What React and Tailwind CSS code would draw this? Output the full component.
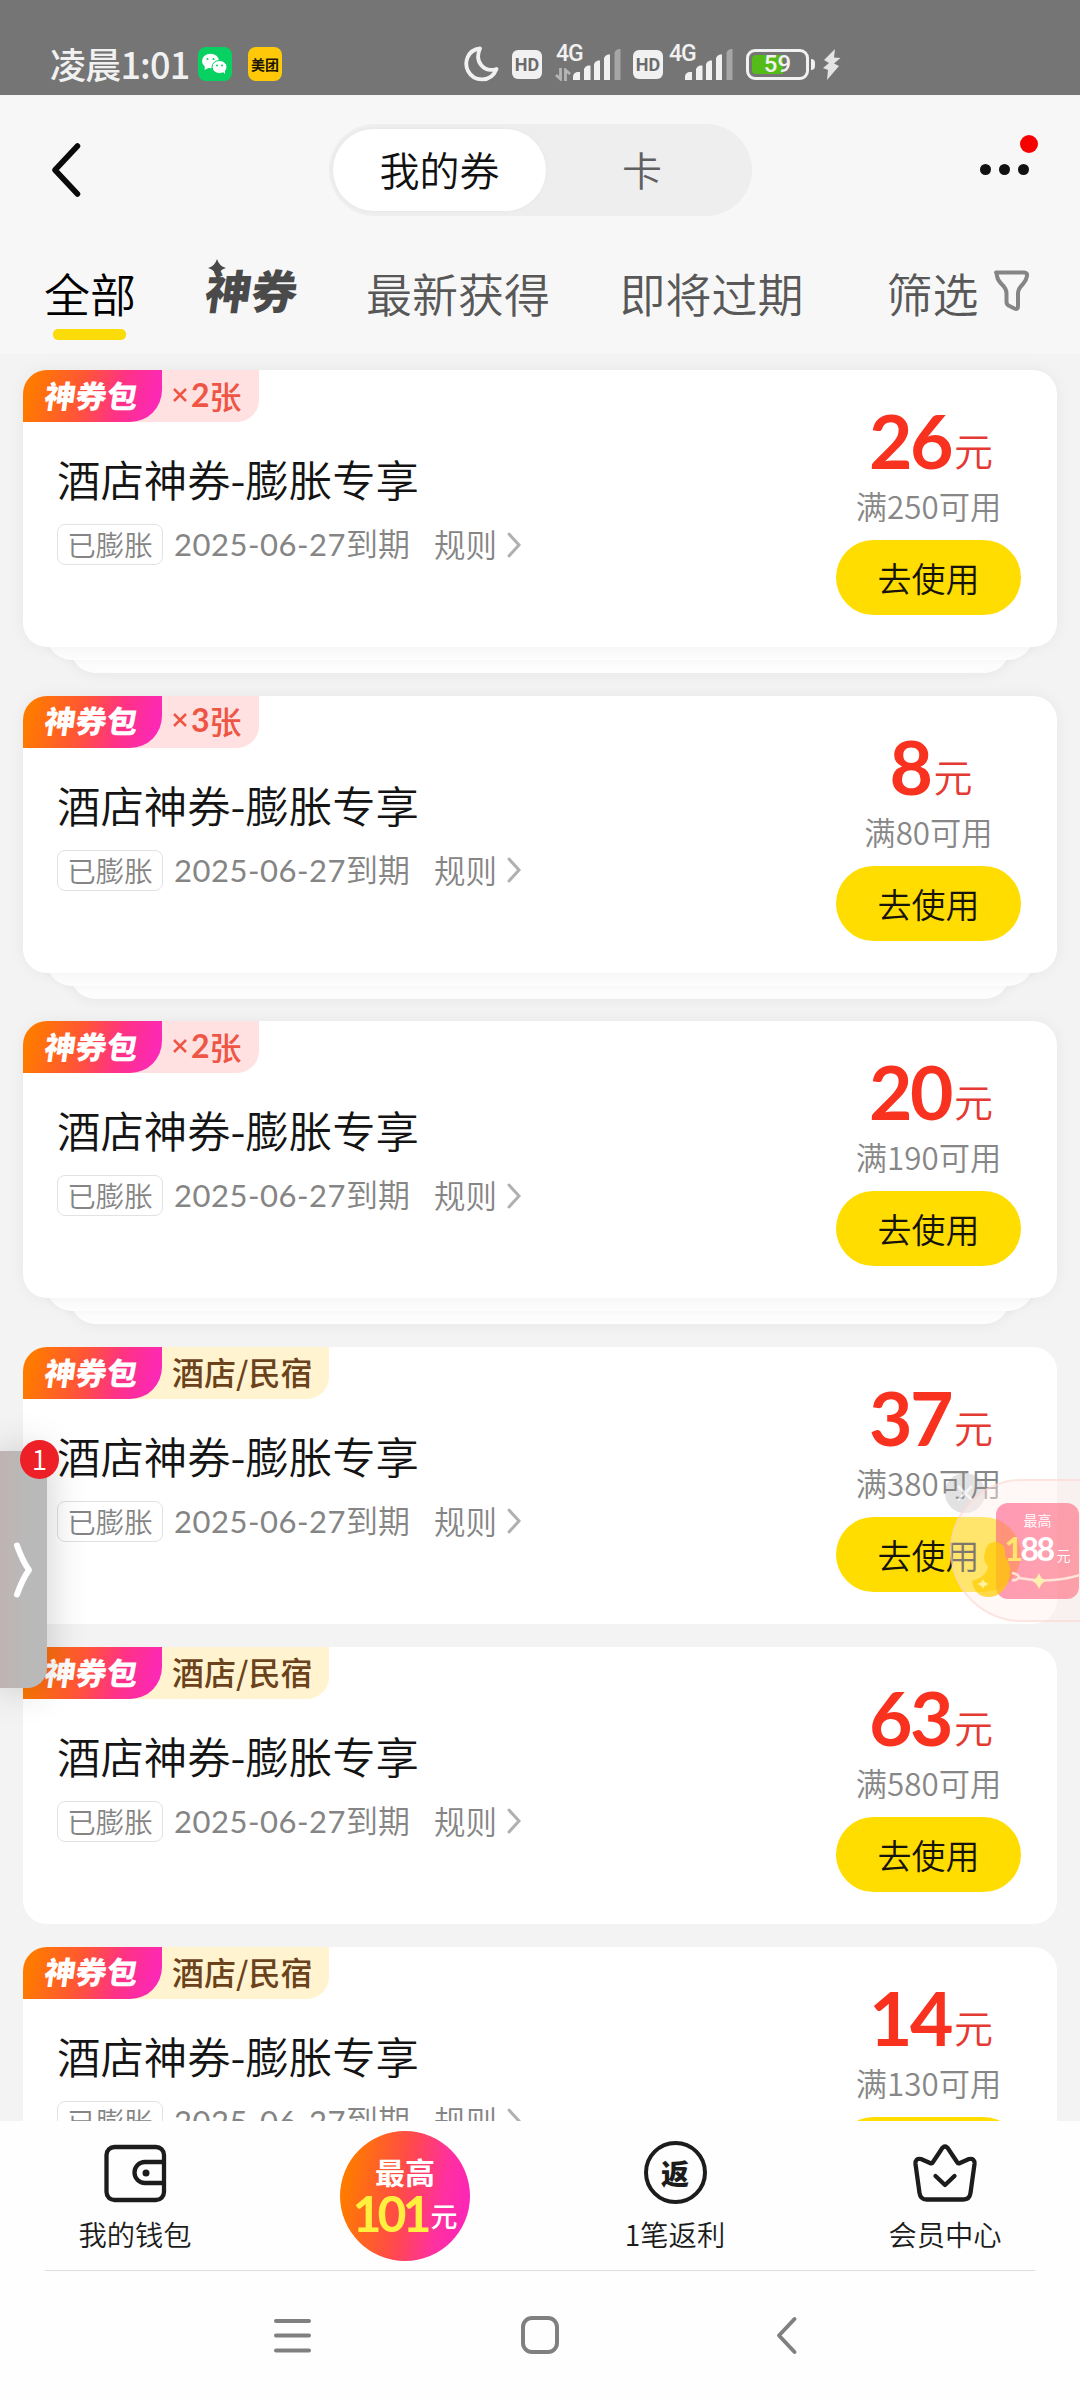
import React from "react";

const coupons = [
  { amount: 26, limit: 250, count: 2 },
  { amount: 8, limit: 80, count: 3 },
  { amount: 20, limit: 190, count: 2 },
  { amount: 37, limit: 380 },
  { amount: 63, limit: 580 },
  { amount: 14, limit: 130 },
];

const Signal = () => (
  <svg width="48" height="31" viewBox="0 0 48 31" fill="#f1f1f1">
    <path d="M0 31v-3q0-4 4-5h3v8z" />
    <path d="M11 31V20q1-3 4-3.500h2.500V31z" />
    <path d="M21 31V15q1-3 4-3.500h2V31z" />
    <path d="M31 31V9q1-3 4-3.500h2V31z" />
    <path d="M41.500 31V3.500q1-3 4-3.500h2v31z" opacity="0.4" />
  </svg>
);

const HdBadge = () => (
  <div className="w-[30px] h-[29px] rounded-[6px] bg-[#f1f1f1] text-[#6a6a6a] flex items-center justify-center font-['Roboto'] font-bold text-[18px]">
    HD
  </div>
);

const StatusBar = () => (
  <div className="h-[95px] bg-[#757575] relative text-[#f1f1f1] shrink-0">
    <div className="flex items-center pl-[50px] pt-[36px] h-[90px]">
      <span className="text-[36px] leading-[52px] font-medium w-[148px] whitespace-nowrap tracking-[-0.8px]">凌晨1:01</span>
      <svg className="mt-[2px]" width="34" height="34" viewBox="0 0 34 34">
        <rect width="34" height="34" rx="8" fill="#07d160" />
        <ellipse cx="12.500" cy="14" rx="8.500" ry="7.300" fill="#fff" />
        <path d="M7 18l-.500 5 4-2z" fill="#fff" />
        <ellipse cx="21.500" cy="20" rx="7.500" ry="6.500" fill="#fff" stroke="#07d160" />
        <path d="M24 24l3 3v-5z" fill="#fff" />
        <g fill="#07d160">
          <circle cx="9.500" cy="12" r="1.100" />
          <circle cx="15.500" cy="12" r="1.100" />
          <circle cx="19" cy="18.500" r="1" />
          <circle cx="24" cy="18.500" r="1" />
        </g>
      </svg>
      <div className="ml-4 mt-[2px] size-[34px] rounded-[8px] bg-[#ffc90a] text-[#1c1600] text-[14px] font-bold flex items-center justify-center">美团</div>

      <div className="flex items-center ml-[182px] mt-[2px]">
        <svg width="35" height="36" viewBox="0 0 35 36" fill="none" stroke="#f1f1f1" strokeWidth="3.800" strokeLinejoin="round">
          <path d="M16 2.500C3 4 0 17 4 25c6 11 23 12 28.500-2C20 27 10 16 16 2.500z" />
        </svg>
        <div className="ml-[13px]"><HdBadge /></div>
        <div className="ml-[13px] w-[66px] h-[36px] relative">
          <span className="absolute left-[1px] -top-[4px] font-['Roboto'] font-medium text-[23px] leading-[24px] tracking-[-1px]">4G</span>
          <svg className="absolute left-0 top-[22px]" width="16" height="13" viewBox="0 0 16 13" fill="none" stroke="#b5b5b5" strokeWidth="2.800">
            <path d="M5.500 0v11L1 7M10.500 13V2l4.500 4" />
          </svg>
          <div className="absolute right-0 top-[3px]"><Signal /></div>
        </div>
        <div className="ml-[12px]"><HdBadge /></div>
        <div className="ml-[5px] w-[65px] h-[36px] relative">
          <span className="absolute left-[1px] -top-[4px] font-['Roboto'] font-medium text-[23px] leading-[24px] tracking-[-1px]">4G</span>
          <div className="absolute right-0 top-[3px]"><Signal /></div>
        </div>
        <div className="ml-[13px] w-[63px] h-[31px] rounded-[9px] border-[3.500px] border-[#f1f1f1] relative flex items-center justify-center">
          <div className="absolute left-[3px] top-[3px] w-[31px] h-[19px] rounded-l-[4px] bg-[#55bb18]" />
          <span className="relative font-['Roboto'] font-medium text-[24px] leading-none">59</span>
        </div>
        <div className="ml-[2px] w-[4px] h-[11px] rounded-r bg-[#f1f1f1]" />
        <svg className="ml-[7px]" width="19" height="31" viewBox="0 0 19 31" fill="#e4e4e4">
          <path d="M13 0L2 11l5 3-6 5 5 2-1 10L17 17l-5-2.500L18.500 9 12 8.500z" />
        </svg>
      </div>
    </div>
  </div>
);

const Header = () => (
  <div className="h-[121px] flex items-center relative shrink-0">
    <svg className="ml-[50px] mt-[28px]" width="32" height="54" viewBox="0 0 32 54" fill="none" stroke="#0a0a0a" strokeWidth="5.500" strokeLinecap="round" strokeLinejoin="round">
      <path d="M27.500 3L5 27l22.500 24" />
    </svg>
    <div className="ml-[247px] mt-[29px] w-[423px] h-[92px] rounded-full bg-[#eeeeee] flex items-center text-[40px]">
      <div className="ml-1 w-[213px] h-[82px] pb-[2px] rounded-full bg-white shadow-[0_0_4px_rgba(0,0,0,0.04)] flex items-center justify-center text-[#111]">我的券</div>
      <div className="flex-1 text-center text-[#606060] pr-[14px] pb-[2px]">卡</div>
    </div>
    <div className="ml-[228px] mt-[27px] flex gap-2 relative">
      <i className="size-[11px] rounded-full bg-[#111]" />
      <i className="size-[11px] rounded-full bg-[#111]" />
      <i className="size-[11px] rounded-full bg-[#111]" />
      <i className="absolute -right-[9px] -top-[29px] size-[18px] rounded-full bg-[#f60000]" />
    </div>
  </div>
);

const Tabs = () => (
  <div className="h-[138px] shrink-0 flex items-start pl-[44px] pt-[41px] text-[46px] leading-[70px] text-[#585858] whitespace-nowrap">
    <div className="w-[160px] text-black">
      全部
      <div className="ml-[9px] mt-[2px] w-[73px] h-[11px] rounded-[5px] bg-[#fbdb08]" />
    </div>
    <div className="w-[162px] relative font-black text-[#4a4a4a] text-[46px] leading-[64px]">
      <span className="inline-block -skew-x-8 ml-[2px]">神券</span>
      <svg className="absolute left-[4px] top-[2px]" width="18" height="18" viewBox="0 0 18 18" fill="#4a4a4a">
        <path d="M9 0Q11 7 18 9 11 11 9 18 7 11 0 9 7 7 9 0z" />
      </svg>
    </div>
    <div className="w-[253.500px]">最新获得</div>
    <div className="w-[267px]">即将过期</div>
    <div>筛选</div>
    <svg className="ml-[12px] mt-[13px]" width="38" height="42" viewBox="0 0 38 42" fill="none" stroke="#858585" strokeWidth="4" strokeLinejoin="round">
      <path d="M5 2.500h28q3.500 0 3 3.500-.500 4-4 8-5 5-5 9v13q0 4-3.500 2.500l-6-3q-2-1-2-4v-8q0-5-5-9.500-4-4-4.500-8-.500-3.500-1-3.500z" />
    </svg>
  </div>
);

const Coupon = ({ amount, limit, count }) => (
  <div className={count ? "relative mb-[48.670px] shrink-0" : "relative mb-[22.850px] shrink-0"}>
    {count && (
      <>
        <div className="absolute left-[47px] right-[47px] -bottom-[26px] h-[60px] rounded-[26px] bg-[#fdfdfd] shadow-[0_2px_14px_rgba(0,0,0,0.05)]" />
        <div className="absolute left-[23px] right-[23px] -bottom-[13px] h-[60px] rounded-[26px] bg-[#fdfdfd] shadow-[0_0_8px_rgba(0,0,0,0.05)]" />
      </>
    )}
    <div className={`relative h-[277px] rounded-[24px] bg-white flex justify-between ${count ? "shadow-[0_0_16px_rgba(0,0,0,0.05)]" : ""}`}>
      <div>
        <div className={`flex w-fit h-[52px] rounded-tl-[24px] rounded-br-[22px] ${count ? "bg-[#ffe1e1] text-[#ee5545]" : "bg-[#fff4cf] text-[#6b421c]"}`}>
          <div className="w-[139px] h-[52px] rounded-tl-[24px] rounded-br-[32px] bg-[linear-gradient(105deg,#ff7a00_8%,#ff5536_42%,#ff3285_68%,#fb26c4_100%)] flex items-center justify-center">
            <span className="text-white font-black text-[31px] -skew-x-8 pb-[2px] pr-[2px]">神券包</span>
          </div>
          <div className={`flex items-center text-[32px] font-medium pl-[10px] pb-[3px] ${count ? "w-[97px]" : "w-[167px]"}`}>
            {count ? (
              <>
                <svg width="16" height="16" viewBox="0 0 16 16" stroke="#ee5545" strokeWidth="2.500"><path d="M2 2l12 12M14 2L2 14" /></svg>
                <span className="ml-[3px] font-['Lato'] font-bold">{count}</span>张
              </>
            ) : (
              "酒店/民宿"
            )}
          </div>
        </div>
        <h3 className="ml-[34px] mt-[24px] text-[43.400px] leading-[64px] text-[#141414] whitespace-nowrap">酒店神券-膨胀专享</h3>
        <div className="ml-[34px] mt-[12px] flex items-center whitespace-nowrap text-[#858585] text-[32px] leading-[40px]">
          <div className="w-[106px] h-[41px] rounded-[8px] border border-[#e2e2e2] text-[28.500px] leading-[37px] text-center">已膨胀</div>
          <div className="ml-[11px] mb-[3px] w-[260px]">
            <span className="font-['Lato'] font-normal text-[31px] tracking-[0.500px]">2025-06-27</span>到期
          </div>
          <span className="text-[31.500px] mb-[3px]">规则</span>
          <svg className="ml-[9px]" width="16" height="26" viewBox="0 0 16 26" fill="none" stroke="#b0b0b0" strokeWidth="3" strokeLinecap="round">
            <path d="M3 2l10 11L3 24" />
          </svg>
        </div>
      </div>
      <div className="w-[185px] mr-[36px] flex flex-col items-center whitespace-nowrap">
        <div className="mt-[40px] ml-[5px] h-[73px] flex items-baseline text-[#f9311f]">
          <span className="font-['Lato'] font-bold text-[75px] leading-[60px] tracking-[-2.500px]">{amount}</span>
          <span className="relative -top-[3px] text-[39px] leading-[40px] text-[#e43a33] ml-[3px]">元</span>
        </div>
        <div className="text-[31.300px] leading-[46px] text-[#878787]">满{limit}可用</div>
        <div className="mt-[11px] w-[185px] h-[75px] rounded-full bg-[#ffdd00] text-[#16130a] text-[34px] leading-[75px] text-center">去使用</div>
      </div>
    </div>
  </div>
);

const SidePanel = () => (
  <div className="absolute left-0 top-[1451px] w-[47px] h-[237px] rounded-br-[20px] rounded-tr-[10px] bg-[linear-gradient(90deg,#bfb4b3,#b9b9b9_60%)] shadow-[0_0_40px_rgba(0,0,0,0.2)]">
    <svg className="absolute left-[13px] top-[90px]" width="22" height="58" viewBox="0 0 22 58" fill="none" stroke="#fff" strokeWidth="6" strokeLinecap="round" strokeLinejoin="round">
      <path d="M4 4.500Q10 21 16 29 10 37 4 53.500" />
    </svg>
    <div className="absolute left-[20px] -top-[11px] size-[39px] rounded-full bg-[#ee2027] text-white text-[28px] leading-[37px] text-center">1</div>
  </div>
);

const FloatingPromo = () => (
  <div className="absolute right-0 top-[1470px] w-[140px] h-[160px] overflow-hidden">
    <div className="absolute left-[5px] top-[3px] size-[40px] rounded-full bg-[#8c8c8c]/25 flex items-center justify-center">
      <svg width="18" height="18" viewBox="0 0 18 18" stroke="#fff" strokeWidth="2.500" opacity="0.7"><path d="M2 2l14 14M16 2L2 16" /></svg>
    </div>
    <div className="absolute left-[10px] top-[9px] w-[200px] h-[143px] rounded-l-full border-2 border-[#fbd0ca]/50 bg-[#fff0ee]/45" />
    <div className="absolute left-[56px] top-[33px] w-[83px] h-[96px] rounded-[12px] bg-[linear-gradient(100deg,#ff5a8899,#ff5a6a88)]" />
    <svg className="absolute left-0 top-0" width="140" height="160" viewBox="0 0 140 160">
      <path
        d="M45 82q2-11 11-10 10 1 9 14 6 8 5 19-4 20-20 22-15 1-18-16 14-4 16-14-6-7-3-15z"
        fill="#ffcc00"
        opacity="0.7"
      />
      <path d="M72 103q6 1 7 4-2 4-7 3M79 108q32 6 61-3" fill="none" stroke="#ffe3d8" strokeWidth="2.500" />
      <path d="M99 103q2 6 7 8-5 2-7 8-2-6-7-8 5-2 7-8z" fill="#fff0b0" />
      <path d="M43 109q1 4 6 5-5 1-6 5-1-4-6-5 5-1 6-5z" fill="#fff3a0" />
    </svg>
    <div className="absolute left-[55px] top-[33px] w-[85px] flex flex-col items-center text-white">
      <span className="text-[14px] leading-[20px] mt-[7px]">最高</span>
      <div className="flex items-baseline leading-[36px] mt-[1px]">
        <span className="font-['Lato'] font-bold text-[32px] tracking-[-2.500px]"><span className="text-[#ffe470]">1</span>88</span>
        <span className="text-[14px] ml-[4px]">元</span>
      </div>
    </div>
  </div>
);

const BottomBar = () => (
  <div className="absolute left-0 top-[2121px] w-full h-[279px] bg-[#fefefe] text-[#1c1c1c]">
    <div className="h-[149px] grid grid-cols-4 text-[28.300px] leading-[40px] text-center mx-auto">
      <div className="flex flex-col items-center">
        <svg className="mt-[22px]" width="64" height="60" viewBox="0 0 64 60" fill="none" stroke="#1c1c1c" strokeWidth="4.300">
          <rect x="3.500" y="4" width="57.500" height="53" rx="8" />
          <path d="M61 19H42a10.500 10.500 0 0 0 0 21h19" />
          <circle cx="43" cy="30" r="3.500" fill="#1c1c1c" stroke="none" />
        </svg>
        <span className="mt-[11px]">我的钱包</span>
      </div>
      <div className="flex justify-center">
        <div className="mt-[10px] size-[130px] rounded-full bg-[linear-gradient(100deg,#ff7a00_10%,#ff4a4a_48%,#ff30a0_75%,#fa22c0_100%)] flex flex-col items-center text-white whitespace-nowrap">
          <span className="text-[30px] leading-[32px] font-bold mt-[24px]">最高</span>
          <div className="flex items-baseline leading-[44px] mt-[4px]">
            <span className="font-['Lato'] font-bold text-[50px] tracking-[-4px] text-[#fff040]">101</span>
            <span className="relative -top-[5px] text-[27px] font-medium ml-[3px]">元</span>
          </div>
        </div>
      </div>
      <div className="flex flex-col items-center">
        <div className="mt-[20px] size-[63px] rounded-full border-[4.300px] border-[#1c1c1c] flex items-center justify-center text-[28px] font-black">返</div>
        <span className="mt-[10px]">1笔返利</span>
      </div>
      <div className="flex flex-col items-center">
        <svg className="mt-[22px]" width="66" height="60" viewBox="0 0 66 60" fill="none" stroke="#1c1c1c" strokeWidth="4.300" strokeLinecap="round" strokeLinejoin="round">
          <path d="M29 7q4-7 8 0l8 12q1 2 3 1l9-4q6-1 5.500 5l-4 29q-1 6.500-7 6.500H14.500q-6 0-7-6.500l-4-29Q3 15 9 16l9 4q2 1 3-1z" />
          <path d="M23.500 33l9.500 9 9.500-9" />
        </svg>
        <span className="mt-[11px]">会员中心</span>
      </div>
    </div>
    <div className="mx-[45px] h-px bg-[#dedede]" />
    <div className="flex items-center pt-[44px] pl-[273px]">
      <svg width="39" height="40" viewBox="0 0 39 40" stroke="#808080" strokeWidth="4" strokeLinecap="round"><path d="M3 6h33M3 20.500h33M3 35.500h33" /></svg>
      <div className="ml-[209px] w-[38px] h-[38px] rounded-[11px] border-[4px] border-[#808080]" />
      <svg className="ml-[216px]" width="24" height="40" viewBox="0 0 24 40" fill="none" stroke="#808080" strokeWidth="4" strokeLinecap="round" strokeLinejoin="round"><path d="M19.500 4L4 20.500 19.500 37" /></svg>
    </div>
  </div>
);

export default function App() {
  return (
    <div className="relative w-[1080px] h-[2400px] overflow-hidden flex flex-col bg-[#f3f3f3] font-['Noto_Sans_CJK_SC',sans-serif] font-[350]">
      <StatusBar />
      <div className="bg-[#f7f7f7] shrink-0">
        <Header />
        <Tabs />
      </div>
      <div className="px-[23px] pt-4 flex flex-col">
        {coupons.map((c) => (
          <Coupon key={c.amount} {...c} />
        ))}
      </div>
      <BottomBar />
      <SidePanel />
      <FloatingPromo />
    </div>
  );
}
